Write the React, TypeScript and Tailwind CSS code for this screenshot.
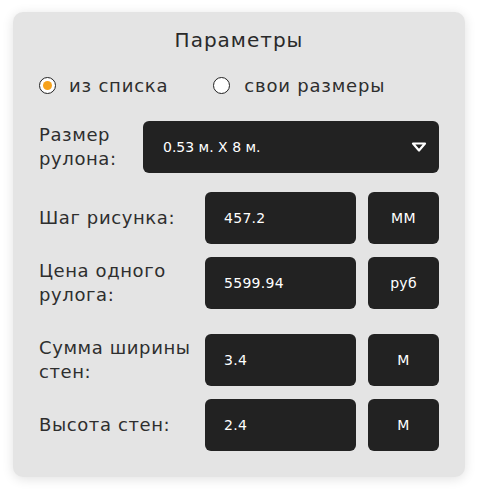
import React from "react";

function Field({ value, unit }: { value: string; unit: string }) {
  return (
    <div className="flex gap-3">
      <div className="w-[151px] h-[52px] bg-[#222222] rounded-[6px] flex items-center pl-[19px] text-white text-[14px] tracking-[0.3px]">
        {value}
      </div>
      <div className="w-[71px] h-[52px] bg-[#222222] rounded-[6px] flex items-center justify-center text-white text-[14px] tracking-[0.3px]">
        {unit}
      </div>
    </div>
  );
}

const label = "text-[18px] leading-[24px] tracking-[0.6px] text-[#2e2e2e]";

export default function App() {
  return (
    <div className="w-[478px] h-[490px] bg-white pt-[12px] pl-[13px] font-['DejaVu_Sans',sans-serif]">
      <div className="w-[452px] h-[465px] bg-[#e4e4e4] rounded-[10px] shadow-[0_2px_12px_rgba(0,0,0,0.12)] px-[26px] pt-[14px] flex flex-col">
        <div className="h-[28px] leading-[28px] text-center text-[20px] tracking-[1px] text-[#2a2a2a]">Параметры</div>
        <div className="mt-[19px] h-[24px] flex items-center text-[18px] tracking-[0.8px] text-[#2e2e2e]">
          <div className="w-[17px] h-[17px] rounded-full border-[1.5px] border-[#222] bg-white flex items-center justify-center">
            <div className="w-[9px] h-[9px] rounded-full bg-[#f7a21b]" />
          </div>
          <span className="ml-[13px]">из списка</span>
          <div className="ml-[45px] w-[17px] h-[17px] rounded-full border-[1.5px] border-[#222] bg-white" />
          <span className="ml-[14px]">свои размеры</span>
        </div>
        <div className="mt-[24px] flex items-center justify-between">
          <div className={label}>
            Размер
            <br />
            рулона:
          </div>
          <div className="w-[296px] h-[52px] bg-[#222222] rounded-[6px] flex items-center justify-between pl-[20px] pr-[12px] text-white text-[14px]">
            <span>0.53 м. X 8 м.</span>
            <svg width="16" height="10" viewBox="0 0 16 10">
              <path d="M2 1.5 H14 L8 8.5 Z" fill="none" stroke="white" strokeWidth="2.2" strokeLinejoin="round" />
            </svg>
          </div>
        </div>
        <div className="mt-[19px] flex items-center justify-between">
          <div className={label}>Шаг рисунка:</div>
          <Field value="457.2" unit="ММ" />
        </div>
        <div className="mt-[13px] flex items-center justify-between">
          <div className={label}>
            Цена одного
            <br />
            рулога:
          </div>
          <Field value="5599.94" unit="руб" />
        </div>
        <div className="mt-[25px] flex items-center justify-between">
          <div className={label}>
            Сумма ширины
            <br />
            стен:
          </div>
          <Field value="3.4" unit="М" />
        </div>
        <div className="mt-[13px] flex items-center justify-between">
          <div className={label}>Высота стен:</div>
          <Field value="2.4" unit="М" />
        </div>
      </div>
    </div>
  );
}
